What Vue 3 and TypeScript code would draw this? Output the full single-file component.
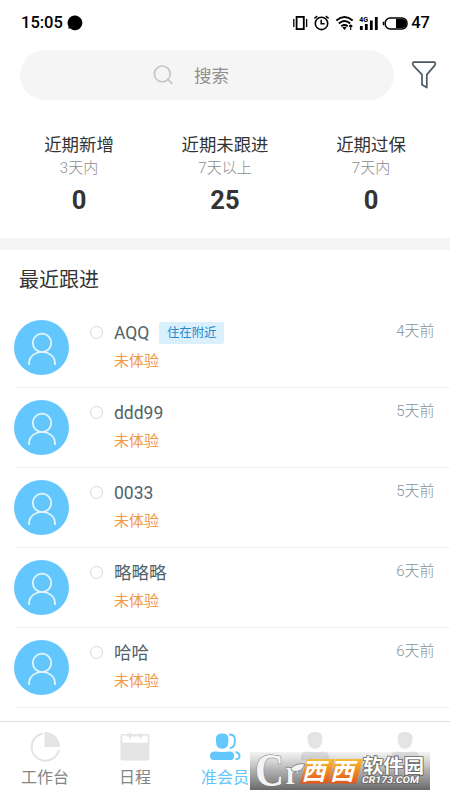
<script setup lang="ts">
/**
 * Prospect list: search bar, three counters, recent follow-ups and tab bar.
 */
import { ref } from 'vue'

interface Stat {
  title: string
  range: string
  count: number
}
interface Member {
  name: string
  tag?: string
  status: string
  time: string
}

const stats: Stat[] = [
  { title: '近期新增', range: '3天内', count: 0 },
  { title: '近期未跟进', range: '7天以上', count: 25 },
  { title: '近期过保', range: '7天内', count: 0 },
]

const members: Member[] = [
  { name: 'AQQ', tag: '住在附近', status: '未体验', time: '4天前' },
  { name: 'ddd99', status: '未体验', time: '5天前' },
  { name: '0033', status: '未体验', time: '5天前' },
  { name: '略略略', status: '未体验', time: '6天前' },
  { name: '哈哈', status: '未体验', time: '6天前' },
]

const tabs = [
  { key: 'work', label: '工作台' },
  { key: 'calendar', label: '日程' },
  { key: 'prospect', label: '准会员' },
  { key: 'member', label: '' },
  { key: 'mine', label: '' },
]
const active = ref('prospect')
</script>

<template>
  <div class="page">
    <header class="status">
      <span class="clock">15:05</span>
      <svg class="bubble" width="16" height="16" viewBox="0 0 16 16">
        <path d="M8 .6a7.300 7.300 0 1 1-5 12.600l-1.600.6.2-2.200A7.300 7.300 0 0 1 8 .6Z" fill="#000" />
      </svg>
      <svg class="signals" width="120" height="20" viewBox="0 0 120 20" fill="none" stroke="#000">
        <rect x="4.6" y="3.9" width="7.2" height="12.2" stroke-width="1.8" />
        <path d="M1.8 6v8M14.6 6v8" stroke-width="1.3" />
        <circle cx="29.5" cy="10.4" r="6.2" stroke-width="1.6" />
        <path d="M29.2 6.7v4h3.5M22.4 5.4l2.8-2.2M36.6 5.4l-2.8-2.2" stroke-width="1.5" />
        <path d="M44.3 7.4q8.2-6.6 16.4 0M46.8 10.4q5.7-4.6 11.4 0M49.3 13.2q3.2-2.4 6.4 0" stroke-width="1.9" />
        <path d="M50.4 14.6q2.1-1.5 4.2 0l-2.1 2.4Z" fill="#000" stroke="none" />
        <path d="M58.7 12v5M57 13.5l1.7-1.6 1.7 1.6" stroke-width="1.1" />
        <text x="67.2" y="8.5" class="net">4G</text>
        <path d="M69.3 13v4M74.3 11v6M79.3 7.5V17M84.3 4v13" stroke-width="2.8" />
        <rect x="93.2" y="5" width="21.8" height="11" rx="5" stroke-width="1.5" />
        <path d="M104 6h6.5q3.8 0 3.8 4.5t-3.8 4.5H104Z" fill="#000" stroke="none" />
        <path d="M91.5 8.7v3.6" stroke-width="1.5" />
      </svg>
      <span class="battery">47</span>
    </header>

    <div class="top">
      <div class="search">
        <svg width="20" height="20" viewBox="0 0 20 20" fill="none" stroke="#c4c4c4" stroke-width="1.6">
          <circle cx="9.3" cy="8.9" r="7.9" />
          <path d="m14.8 14.4 4 4" stroke-linecap="round" />
        </svg>
        <span>搜索</span>
      </div>
      <svg class="filter" width="26" height="30" viewBox="0 0 26 30" fill="none" stroke="#4a5a62" stroke-width="1.7" stroke-linejoin="round">
        <path d="M2.2 2.2h21.6q1 1.2 0 3.2L15.8 14.6v13l-4.8-2.8v-10.2L2.2 5.4q-1-2 0-3.2Z" />
      </svg>
    </div>

    <section class="stats">
      <div v-for="s in stats" :key="s.title" class="stat">
        <div class="stat-title">{{ s.title }}</div>
        <div class="stat-range">{{ s.range }}</div>
        <div class="stat-count">{{ s.count }}</div>
      </div>
    </section>

    <section class="recent">
      <h2>最近跟进</h2>
      <div v-for="m in members" :key="m.name" class="row">
        <div class="avatar">
          <svg width="30" height="34" viewBox="0 0 30 34" fill="none" stroke="#e4f8fc" stroke-width="1.7">
            <circle cx="15" cy="10.8" r="9.2" />
            <path d="M2 33v-1.5C2 24.700 8 20 15 20s13 4.700 13 11.500V33" />
          </svg>
        </div>
        <div class="row-body">
          <i class="dot" />
          <div class="info">
            <div class="name">
              <span class="name-text">{{ m.name }}</span>
              <span v-if="m.tag" class="tag">{{ m.tag }}</span>
            </div>
            <div class="state">{{ m.status }}</div>
          </div>
          <time>{{ m.time }}</time>
        </div>
      </div>
    </section>

    <nav class="tabs">
      <div v-for="t in tabs" :key="t.key" class="tab" :class="{ active: active === t.key }" @click="active = t.key">
        <svg width="32" height="32" viewBox="0 0 32 32" fill="currentColor">
          <template v-if="t.key === 'work'">
            <path d="M13.8 2.4A13.8 13.8 0 1 0 29.9 19" fill="none" stroke="currentColor" stroke-width="2" />
            <path d="M15.5 1a15 15 0 0 1 15.5 15H15.5Z" />
          </template>
          <template v-else-if="t.key === 'calendar'">
            <path d="M3.5 3h25a2 2 0 0 1 2 2v22.5a2 2 0 0 1-2 2h-25a2 2 0 0 1-2-2V5a2 2 0 0 1 2-2Z" />
            <path d="M3.3 5.5q0-1 1-1h23.4q1 0 1 1v6.2H3.3Z" fill="#fff" />
            <path d="M8 4.5h16M11 1.8v6M21.5 1.8v6" stroke="currentColor" stroke-width="1.8" />
          </template>
          <template v-else-if="t.key === 'prospect'">
            <path d="M7 7.3q0-4.8 6.2-4.8t6.2 4.8v3.5q0 6.9-6.2 6.9T7 10.8ZM6 20.5q7 .8 14.5 0 4.6 0 4.6 4v.5q0 4-4 4H5q-4 0-4-4v-.5q0-4 5-4Z" />
            <path d="M20 3.5q5.8 0 5.8 4.5v3q0 5-5 6.4M26.5 21q4 1 4 4.2 0 2.8-4 3" fill="none" stroke="currentColor" stroke-width="1.9" />
          </template>
          <path v-else d="M8.6 5.5Q9.5 1 16 1t7.4 4.5v4.5Q22 17.8 16 17.8T8.6 10ZM8 20.5q8 1.4 16 0 6 0 6 5v4H2v-4q0-5 6-5Z" />
        </svg>
        <span>{{ t.label }}</span>
      </div>
    </nav>

    <svg class="watermark" width="180" height="38" viewBox="0 0 180 38">
      <defs>
        <linearGradient id="plate" x2="0" y2="1">
          <stop offset="0" stop-color="#a0a0a0" stop-opacity=".12" />
          <stop offset=".5" stop-color="#8b8b8b" stop-opacity=".7" />
          <stop offset="1" stop-color="#686868" />
        </linearGradient>
        <linearGradient id="orange" x2="0" y2="1">
          <stop offset="0" stop-color="#f7bd36" />
          <stop offset="1" stop-color="#e3551b" />
        </linearGradient>
      </defs>
      <rect width="180" height="38" fill="url(#plate)" />
      <text class="mark" x="5" y="33.5" textLength="29" lengthAdjust="spacingAndGlyphs">C</text>
      <text class="mark r" x="35.5" y="32" textLength="13" lengthAdjust="spacingAndGlyphs">r</text>
      <path d="M41 16.5q5-6 14-4.5-3 8-10 7.500-4 .5-4-3Z" fill="#f4f4f4" stroke="#777" stroke-width=".8" />
      <path d="M57 7h28l-7 24.500H50ZM86 7h27l-7 24.500H79Z" fill="url(#orange)" />
      <g class="xixi" transform="skewX(-14)">
        <text x="58.5" y="28" textLength="24" lengthAdjust="spacingAndGlyphs">西</text>
        <text x="87" y="28" textLength="24" lengthAdjust="spacingAndGlyphs">西</text>
      </g>
      <text class="soft" x="113" y="20.5" textLength="61" lengthAdjust="spacingAndGlyphs">软件园</text>
      <g transform="skewX(-10)">
        <text class="site" x="117" y="31.5" textLength="57" lengthAdjust="spacingAndGlyphs">CR173.COM</text>
      </g>
    </svg>
  </div>
</template>

<style>
body {
  margin: 0;
  background: #fff;
}
</style>

<style scoped>
.page {
  position: relative;
  display: flex;
  flex-direction: column;
  width: 450px;
  height: 800px;
  overflow: hidden;
  background: #fff;
  color: #333;
  font-family: Roboto, "Noto Sans CJK SC", sans-serif;
}
.status {
  display: flex;
  align-items: center;
  height: 45px;
  flex: none;
  box-sizing: border-box;
  padding: 0 20px 0 21px;
  color: #000;
  font-size: 16.5px;
  font-weight: 500;
}
.bubble {
  margin-left: 4px;
}
.signals {
  margin-left: auto;
  margin-right: -1px;
}
.net {
  font-size: 7px;
  font-weight: 700;
  fill: #000;
  stroke: none;
}
.top {
  display: flex;
  align-items: center;
  flex: none;
  height: 50px;
  margin-top: 5px;
  padding-left: 20px;
}
.search {
  display: flex;
  align-items: center;
  justify-content: center;
  gap: 21px;
  box-sizing: border-box;
  width: 374px;
  height: 50px;
  padding-right: 32px;
  border-radius: 25px;
  background: #f5f5f5;
  color: #909090;
  font-size: 17.5px;
}
.search span {
  margin-top: 1px;
  line-height: 24px;
}
.filter {
  margin-left: 17px;
}
.stats {
  display: flex;
  flex: none;
  height: 138px;
  box-sizing: border-box;
  padding: 31.5px 6px 0;
  text-align: center;
}
.stat {
  flex: 1;
}
.stat-title {
  font-size: 17.4px;
  line-height: 26px;
}
.stat-range {
  margin-top: -1px;
  color: #8c8c8c;
  font-size: 15px;
  font-weight: 300;
  line-height: 22px;
}
.stat-count {
  margin-top: 6px;
  font-size: 25.5px;
  font-weight: 700;
  line-height: 30px;
}
.recent {
  flex: 1;
  min-height: 0;
  overflow: hidden;
  border-top: 12px solid #f5f5f5;
}
h2 {
  margin: 0;
  padding-left: 19px;
  height: 58px;
  font-size: 20px;
  font-weight: 400;
  line-height: 60px;
}
.row {
  display: flex;
  height: 80px;
  padding-left: 14px;
  background: linear-gradient(#f2f2f2, #f2f2f2) 16px 79px / 434px 1px no-repeat;
}
.avatar {
  display: flex;
  align-items: center;
  justify-content: center;
  flex: none;
  width: 55px;
  height: 55px;
  margin-top: 12px;
  border-radius: 50%;
  background: #63c6fd;
}
.avatar svg {
  margin: 3px 0 0 1px;
}
.row-body {
  display: flex;
  flex: 1;
  padding: 12px 15.5px 0 21px;
}
.dot {
  flex: none;
  width: 11px;
  height: 11px;
  margin: 6px 11px 0 0;
  border: 1px solid #d8d8d8;
  border-radius: 50%;
}
.info {
  flex: 1;
}
.name {
  display: flex;
  align-items: center;
  gap: 10px;
  height: 26px;
  color: #50636b;
  font-size: 17.5px;
}
.name-text {
  line-height: 24px;
}
.tag {
  padding: 0 7.5px;
  border-radius: 2px;
  background: #daf1fd;
  color: #2688cc;
  font-size: 12.4px;
  line-height: 22px;
}
.state {
  margin-top: 3px;
  color: #f39a44;
  font-size: 15px;
  line-height: 24px;
}
time {
  color: #84959c;
  font-size: 15px;
  font-weight: 300;
  line-height: 22px;
}
.tabs {
  display: flex;
  flex: none;
  height: 79px;
  box-sizing: border-box;
  border-top: 1px solid #dedede;
  background: #fff;
}
.tab {
  display: flex;
  flex: 1;
  flex-direction: column;
  align-items: center;
  padding-top: 9px;
  color: #e4e4e4;
}
.tab span {
  margin-top: 3px;
  color: #858585;
  font-size: 16px;
  line-height: 24px;
}
.tab.active,
.tab.active span {
  color: #63c6fd;
}
/* sits over the last two tabs */
.watermark {
  position: absolute;
  left: 250px;
  bottom: 10px;
  overflow: visible;
}
.mark {
  fill: #f4f4f4;
  stroke: #777;
  stroke-width: 1;
  paint-order: stroke;
  font-family: "Liberation Serif", serif;
  font-size: 47px;
  font-weight: 700;
}
.mark.r {
  font-size: 34px;
}
.xixi {
  fill: #fff;
  font-family: "Noto Sans CJK SC", sans-serif;
  font-size: 24px;
  font-weight: 700;
}
.soft,
.site {
  fill: #fff;
  stroke: #666;
  stroke-width: 1.6;
  paint-order: stroke;
  font-weight: 700;
}
.soft {
  font-size: 19px;
}
.site {
  font-size: 9.5px;
}
</style>
